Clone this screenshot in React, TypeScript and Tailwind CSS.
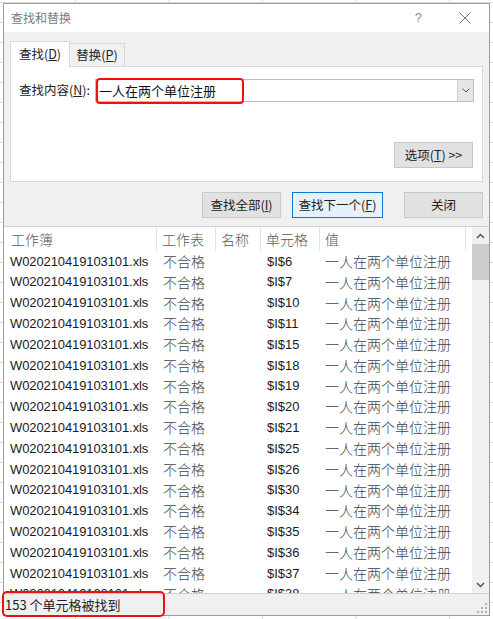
import React from "react";

const cells = ["6", "7", "10", "11", "15", "18", "19", "20", "21", "25", "26", "30", "34", "35", "36", "37", "38"];

const SANS = "font-['Liberation_Sans','Noto_Sans_CJK_SC',sans-serif]";
const CJK = "font-['Noto_Sans_CJK_SC',sans-serif]";

export default function App() {
  return (
    <div
      className={`relative w-[493px] h-[619px] overflow-hidden bg-white p-[3px] ${SANS} bg-[linear-gradient(to_right,#d8d8d8_1px,transparent_1px),linear-gradient(to_bottom,#d8d8d8_1px,transparent_1px)] bg-[size:93.5px_20px] bg-[position:75px_2px]`}
    >
      <div className="w-[487px] h-[613px] border border-[#9c9c9c] bg-[#f0f0f0] flex flex-col">
        {/* title bar */}
        <div className="h-[28px] shrink-0 bg-white flex items-center pl-[7px] pr-[14px]">
          <span className={`text-[12px] text-[#7a7a7a] ${CJK}`}>查找和替换</span>
          <span className="ml-auto text-[13px] text-[#8a8a8a] mr-[37px]">?</span>
          <svg width="12" height="12" viewBox="0 0 12 12" className="mr-[4px]">
            <path d="M0.5 0.5 L11.5 11.5 M11.5 0.5 L0.5 11.5" stroke="#777" strokeWidth="1" />
          </svg>
        </div>

        {/* body */}
        <div className="flex flex-col px-[6px] pt-[8px]">
          {/* tabs */}
          <div className="flex items-end h-[26px]">
            <div className={`h-[26px] w-[60px] bg-white border border-b-0 border-[#d9d9d9] flex items-center justify-center text-[12.5px] text-[#222] ${CJK} relative z-10 -mb-px`}>
              查找(<span className="underline">D</span>)
            </div>
            <div className={`h-[23px] w-[55px] bg-[#f0f0f0] border border-l-0 border-b-0 border-[#d9d9d9] flex items-center justify-center text-[12.5px] text-[#222] ${CJK}`}>
              替换(<span className="underline">P</span>)
            </div>
          </div>
          {/* panel */}
          <div className="h-[116px] bg-white border border-[#d9d9d9] flex flex-col px-[8px]">
            <div className="flex items-center mt-[12px]">
              <span className={`text-[12.5px] text-[#222] w-[76px] ${CJK}`}>
                查找内容(<span className="underline">N</span>):
              </span>
              <div className="relative flex items-center h-[23px] w-[379px] border border-[#bdbdbd] bg-white">
                <span className={`pl-[3px] text-[13px] text-[#111] ${CJK}`}>一人在两个单位注册</span>
                <div className="ml-auto h-full w-[16px] bg-[#e6e6e6] border-l border-[#cfcfcf] flex items-center justify-center">
                  <svg width="8" height="5" viewBox="0 0 8 5">
                    <path d="M0.5 0.5 L4 4 L7.5 0.5" stroke="#555" fill="none" strokeWidth="1" />
                  </svg>
                </div>
                <div className="absolute left-[0px] top-[-2px] w-[148px] h-[26px] border-[2.5px] border-[#f01010] rounded-[4px]" />
              </div>
            </div>
            <div className="flex justify-end mt-[40px] pr-[1px]">
              <div className={`w-[79px] h-[26px] bg-[#e1e1e1] border border-[#c8c8c8] flex items-center justify-center text-[12.5px] text-[#222] ${CJK}`}>
                选项(<span className="underline">T</span>)&nbsp;&gt;&gt;
              </div>
            </div>
          </div>

          {/* buttons */}
          <div className="flex justify-end mt-[10px] pr-[0px]">
            <div className={`w-[79px] h-[26px] bg-[#e1e1e1] border border-[#c8c8c8] flex items-center justify-center text-[12.5px] text-[#222] ${CJK}`}>
              查找全部(<span className="underline">I</span>)
            </div>
            <div className={`ml-[11px] w-[91px] h-[26px] bg-[#e5f1fb] border-[1.5px] border-[#0a78d7] flex items-center justify-center text-[12.5px] text-[#222] ${CJK}`}>
              查找下一个(<span className="underline">F</span>)
            </div>
            <div className={`ml-[21px] w-[79px] h-[26px] bg-[#e1e1e1] border border-[#c8c8c8] flex items-center justify-center text-[12.5px] text-[#222] ${CJK}`}>
              关闭
            </div>
          </div>
        </div>

        {/* results list */}
        <div className="mt-[8px] h-[368px] shrink-0 bg-white border-t border-b border-[#d0d0d0] flex">
          <div className="flex-1 flex flex-col overflow-hidden">
            <div className={`h-[24px] shrink-0 flex items-center text-[14px] text-[#5a5a5a] ${CJK} font-light`}>
              <div className="w-[153px] pl-[7px] border-r border-[#e3e3e3] h-full flex items-center">工作簿</div>
              <div className="w-[59px] pl-[5px] border-r border-[#e3e3e3] h-full flex items-center">工作表</div>
              <div className="w-[45px] pl-[5px] border-r border-[#e3e3e3] h-full flex items-center">名称</div>
              <div className="w-[59px] pl-[5px] border-r border-[#e3e3e3] h-full flex items-center">单元格</div>
              <div className="w-[146px] pl-[5px] border-r border-[#e3e3e3] h-full flex items-center">值</div>
            </div>
            <div className="flex-1 overflow-hidden">
              {cells.map((c, i) => (
                <div key={i} className="h-[20.8px] flex items-center">
                  <div className="w-[153px] pl-[6px] text-[13px] text-[#1a1a1a] tracking-[-0.1px]">W020210419103101.xls</div>
                  <div className={`w-[104px] pl-[6px] text-[14px] text-[#444] font-light ${CJK}`}>不合格</div>
                  <div className="w-[59px] pl-[6px] text-[13px] text-[#1a1a1a]">$I${c}</div>
                  <div className={`pl-[5px] text-[14px] text-[#3c4250] font-light ${CJK}`}>一人在两个单位注册</div>
                </div>
              ))}
            </div>
          </div>
          {/* scrollbar */}
          <div className="w-[17px] shrink-0 bg-[#f0f0f0] flex flex-col items-center">
            <div className="h-[17px] flex items-center justify-center">
              <svg width="9" height="6" viewBox="0 0 9 6">
                <path d="M1 5 L4.5 1.5 L8 5" stroke="#555" fill="none" strokeWidth="1.5" />
              </svg>
            </div>
            <div className="w-[17px] h-[36px] bg-[#cdcdcd]" />
            <div className="flex-1" />
            <div className="h-[17px] flex items-center justify-center">
              <svg width="9" height="6" viewBox="0 0 9 6">
                <path d="M1 1 L4.5 4.5 L8 1" stroke="#555" fill="none" strokeWidth="1.5" />
              </svg>
            </div>
          </div>
        </div>

        {/* status bar */}
        <div className="flex-1 relative flex items-center pl-[1px]">
          <span className={`text-[13px] text-[#222] ${CJK}`}>153 个单元格被找到</span>
          <div className="absolute left-[-2px] top-[-3px] w-[163px] h-[26px] border-[2.5px] border-[#f01010] rounded-[5px]" />
          <svg width="10" height="10" viewBox="0 0 10 10" className="absolute right-[2px] bottom-[2px]">
            <rect x="8" y="0" width="2" height="2" fill="#b0b0b0" />
            <rect x="4" y="4" width="2" height="2" fill="#b0b0b0" />
            <rect x="8" y="4" width="2" height="2" fill="#b0b0b0" />
            <rect x="0" y="8" width="2" height="2" fill="#b0b0b0" />
            <rect x="4" y="8" width="2" height="2" fill="#b0b0b0" />
            <rect x="8" y="8" width="2" height="2" fill="#b0b0b0" />
          </svg>
        </div>
      </div>
    </div>
  );
}
